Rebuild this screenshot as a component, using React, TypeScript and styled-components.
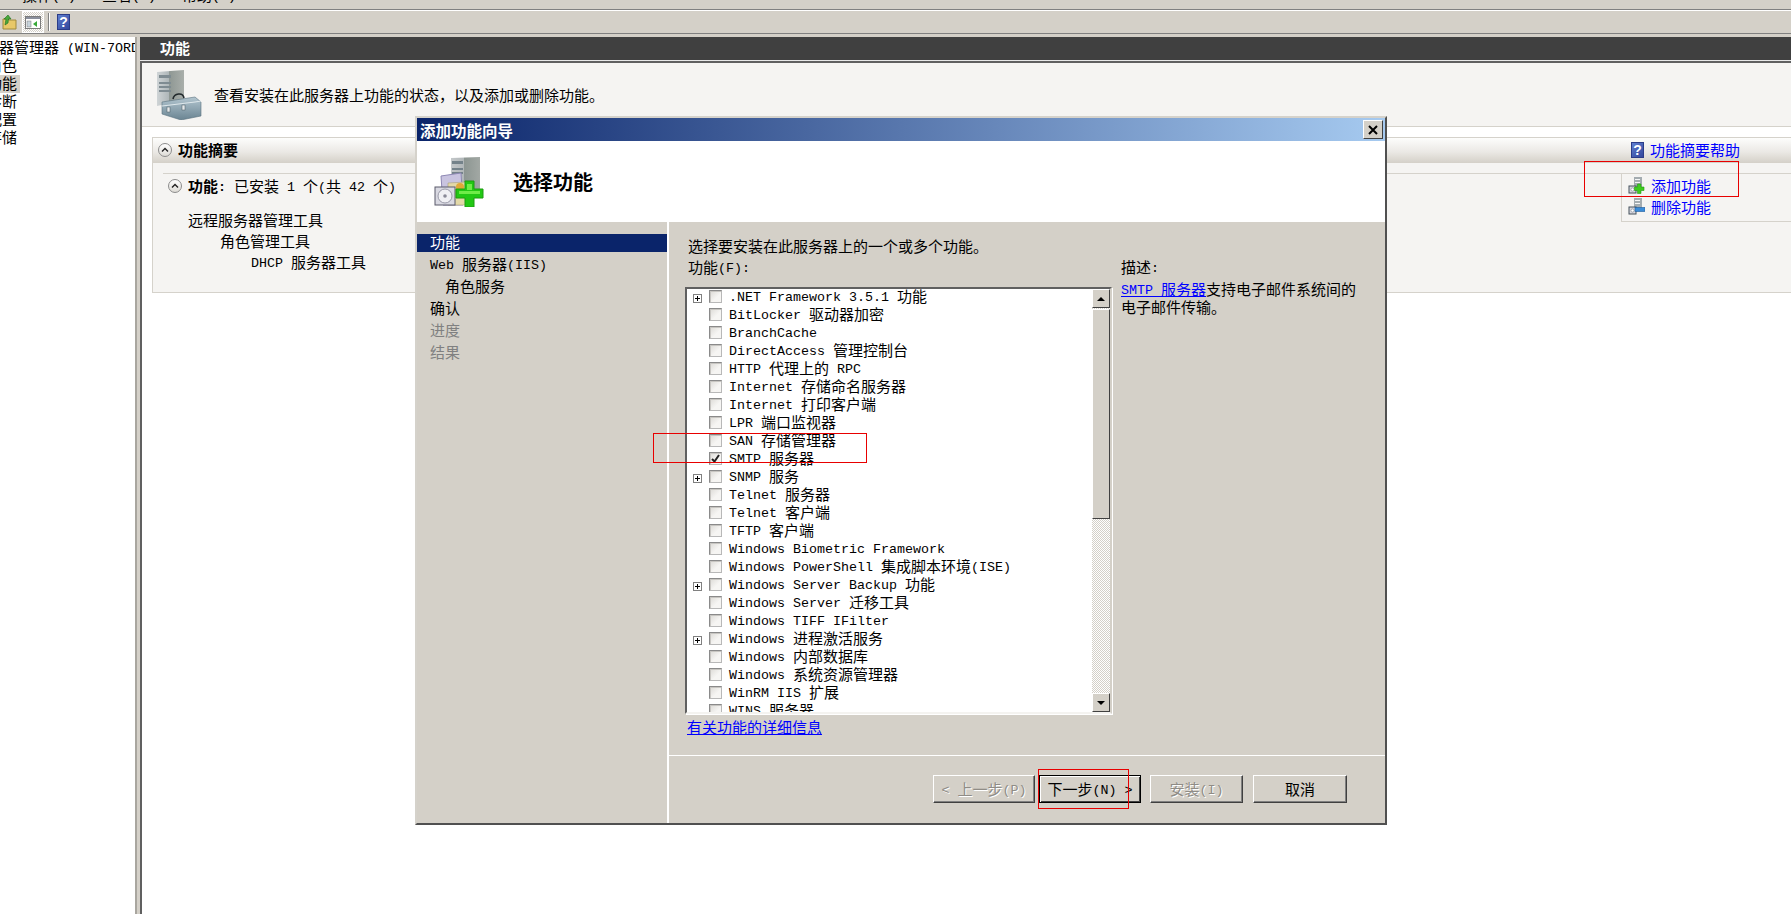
import React from 'react';
import styled, { createGlobalStyle, css } from 'styled-components';

const FACE = '#d4d0c8';
const PAPER = '#f5f4f2';
const LINE = '#d5d2cb';
const NAVY = '#0a246a';
const LINK = '#0000ff';

const GlobalStyle = createGlobalStyle`
  html, body {
    margin: 0;
    height: 100%;
    background: #fff;
    overflow: hidden;
  }
  body {
    font-family: "Noto Sans CJK SC", "Liberation Sans", sans-serif;
    font-size: 15px;
    line-height: 16px;
    color: #000;
  }
`;

const Latin = styled.span`
  position: relative;
  top: -1px;
  font-family: "Liberation Mono", "Noto Sans CJK SC", monospace;
  font-size: 13.33px;
  line-height: 0;
  white-space: pre;
`;

// SimSun-style runs: latin is half the width of the CJK glyphs, so it gets its own size
const Mixed: React.FC<{ text: string }> = ({ text }) => (
  <>
    {text.split(/([\u0000-\u00ff]+)/).map((run, i) =>
      i % 2 === 1 ? <Latin key={i}>{run}</Latin> : run
    )}
  </>
);

const Page = styled.div`
  position: relative;
  display: flex;
  flex-direction: column;
  width: 1791px;
  height: 914px;
  overflow: hidden;
`;

const MenuBar = styled.div`
  display: flex;
  flex: none;
  height: 9px;
  padding-left: 22px;
  gap: 26px;
  background: ${FACE};
  border-bottom: 1px solid #808080;
  overflow: hidden;
`;

const MenuItem = styled.span`
  margin-top: -13px;
  height: 18px;
`;

const ToolBar = styled.div`
  display: flex;
  flex: none;
  align-items: center;
  height: 22px;
  padding-left: 2px;
  background: ${FACE};
  border-top: 1px solid #fff;
  border-bottom: 1px solid #808080;
`;

const ToolToggle = styled.div`
  display: flex;
  align-items: center;
  justify-content: center;
  width: 22px;
  height: 22px;
  margin-left: 5px;
  box-sizing: border-box;
  border: 1px solid #fff;
  background-image: conic-gradient(${FACE} 25%, #fff 0 50%, ${FACE} 0 75%, #fff 0);
  background-size: 2px 2px;
`;

const ToolSeparator = styled.div`
  width: 1px;
  height: 18px;
  margin: 0 8px 0 4px;
  background: #808080;
  box-shadow: 1px 0 0 #fff;
`;

const Workspace = styled.div`
  display: flex;
  flex: 1;
  min-height: 0;
  padding-top: 3px;
  background: ${FACE};
`;

const TreePanel = styled.div`
  flex: none;
  width: 135px;
  padding-top: 2px;
  background: #fff;
  overflow: hidden;
`;

const TreeRoot = styled.div`
  margin-left: -31px;
  white-space: nowrap;
  height: 18px;
`;

const TreeNode = styled.div<{ $selected?: boolean }>`
  width: fit-content;
  margin-left: -13px;
  padding-right: 3px;
  height: 18px;
  background: ${(p) => (p.$selected ? FACE : 'transparent')};
`;

const Splitter = styled.div`
  flex: none;
  width: 5px;
  box-sizing: border-box;
  border-left: 2px solid #a9a69f;
`;

const ContentPane = styled.div`
  display: flex;
  flex: 1;
  flex-direction: column;
  min-width: 0;
  background: #fff;
`;

const PaneTitle = styled.div`
  flex: none;
  height: 23px;
  padding-left: 20px;
  line-height: 22px;
  font-weight: 700;
  color: #fff;
  background: #404040;
  border-bottom: 1px solid #e8e8e8;
`;

const PaneBody = styled.div`
  flex: 1;
  border-top: 2px solid #606060;
  border-left: 2px solid #606060;
`;

const IntroStrip = styled.div`
  display: flex;
  align-items: center;
  gap: 11px;
  height: 63px;
  padding-left: 15px;
  background: ${PAPER};
  border-bottom: 1px solid ${LINE};
`;

const Section = styled.div`
  margin: 10px 0 0 10px;
  height: 154px;
  background: ${PAPER};
  border: 1px solid ${LINE};
  border-right: 0;
`;

const SectionHead = styled.div`
  display: flex;
  align-items: center;
  height: 25px;
  box-sizing: border-box;
  padding: 0 51px 2px 5px;
  background: linear-gradient(#fdfdfc, #ebe9e5 55%, ${FACE});
`;

const HeadLabel = styled.span`
  flex: 1;
  margin-left: 6px;
  font-weight: 700;
`;

const ChevronRound = styled.span`
  display: flex;
  flex: none;
  align-items: center;
  justify-content: center;
  width: 14px;
  height: 14px;
  box-sizing: border-box;
  border: 1px solid #8c8c8c;
  border-radius: 50%;
  background: linear-gradient(#ffffff, #dddbd5);
`;

const ActionLink = styled.a`
  display: flex;
  align-items: center;
  gap: 6px;
  height: 21px;
  color: ${LINK};
`;

const SummaryBody = styled.div`
  display: flex;
  height: 116px;
  margin: 10px 0 0 10px;
  border-top: 1px solid ${LINE};
`;

const SummaryText = styled.div`
  flex: 1;
  padding: 2px 0 0 5px;
`;

const SummaryHead = styled.div`
  display: flex;
  align-items: center;
  gap: 6px;
  height: 20px;
  margin-bottom: 14px;
`;

const Bold = styled.b`
  font-weight: 700;
`;

const SummaryLine = styled.div<{ $indent: number }>`
  height: 21px;
  line-height: 19px;
  padding-left: ${(p) => p.$indent}px;
`;

const ActionBox = styled.div`
  flex: none;
  align-self: flex-start;
  width: 163px;
  height: 46px;
  padding: 1px 0 0 6px;
  border-left: 1px solid ${LINE};
  border-bottom: 1px solid ${LINE};
`;

/* wizard window, floats over the snap-in */
const Wizard = styled.div`
  position: absolute;
  left: 415px;
  top: 116px;
  display: flex;
  flex-direction: column;
  width: 972px;
  height: 709px;
  box-sizing: border-box;
  background: ${FACE};
  border: 2px solid;
  border-color: ${LINE} #505050 #505050 ${LINE};
`;

const WizardTitle = styled.div`
  display: flex;
  flex: none;
  align-items: center;
  justify-content: space-between;
  height: 23px;
  padding: 0 2px 0 3px;
  font-weight: 700;
  font-size: 15.5px;
  color: #fff;
  background: linear-gradient(90deg, ${NAVY}, #a6caf0);
`;

const CloseButton = styled.div`
  display: flex;
  align-items: center;
  justify-content: center;
  width: 20px;
  height: 19px;
  box-sizing: border-box;
  background: ${FACE};
  border: 1px solid;
  border-color: #fff #404040 #404040 #fff;
`;

const WizardHead = styled.div`
  display: flex;
  flex: none;
  align-items: center;
  gap: 29px;
  height: 81px;
  padding: 0 0 0 17px;
  background: #fff;
`;

const WizardHeading = styled.div`
  font-size: 20px;
  font-weight: 700;
`;

const WizardBody = styled.div`
  display: flex;
  flex: 1;
  min-height: 0;
`;

const StepNav = styled.div`
  flex: none;
  width: 250px;
  padding-top: 12px;
  border-right: 2px solid #fff;
`;

const StepItem = styled.div<{ $active?: boolean; $muted?: boolean; $sub?: boolean }>`
  height: 18px;
  margin-bottom: 4px;
  padding-left: ${(p) => (p.$sub ? 28 : 13)}px;
  ${(p) =>
    p.$active &&
    css`
      background: ${NAVY};
      color: #fff;
    `}
  ${(p) =>
    p.$muted &&
    css`
      color: #808080;
    `}
`;

const StepPane = styled.div`
  display: flex;
  flex: 1;
  flex-direction: column;
  min-width: 0;
  padding-top: 16px;
`;

const PaneLine = styled.div`
  height: 18px;
  padding-left: 19px;
`;

const PaneColumns = styled.div`
  display: flex;
  margin-top: 3px;
`;

const ListColumn = styled.div`
  flex: none;
  width: 427px;
  margin-left: 16px;
`;

const ListLabel = styled.div`
  height: 18px;
  padding-left: 3px;
`;

const ListBox = styled.div`
  display: flex;
  height: 427px;
  margin-top: 10px;
  box-sizing: border-box;
  background: #fff;
  border: 2px solid;
  border-color: #606060 ${FACE} #f4f3f0 #606060;
  box-shadow: 1px 1px 0 #fff;
`;

const ListRows = styled.div`
  flex: 1;
  overflow: hidden;
`;

const FeatureRow = styled.div`
  display: flex;
  align-items: center;
  height: 18px;
  white-space: nowrap;
`;

const FeatureName = styled.span`
  margin-bottom: 4px;
`;

const ExpanderSlot = styled.span`
  display: flex;
  flex: none;
  align-items: center;
  justify-content: center;
  width: 9px;
  height: 9px;
  margin: 0 7px 0 6px;
`;

const Expander = styled.span`
  position: relative;
  width: 9px;
  height: 9px;
  box-sizing: border-box;
  background: #fff;
  border: 1px solid #808080;
  &::before {
    content: '';
    position: absolute;
    left: 1px;
    top: 3px;
    width: 5px;
    height: 1px;
    background: #000;
  }
  &::after {
    content: '';
    position: absolute;
    left: 3px;
    top: 1px;
    width: 1px;
    height: 5px;
    background: #000;
  }
`;

const CheckBox = styled.span`
  display: flex;
  flex: none;
  align-items: center;
  justify-content: center;
  width: 13px;
  height: 13px;
  margin: 0 7px 3px 0;
  box-sizing: border-box;
  background: linear-gradient(135deg, #dcdad6, #f6f5f3 60%);
  border: 1px solid;
  border-color: #8a8a8a #b8b8b8 #b8b8b8 #8a8a8a;
  box-shadow: inset 1px 1px 0 #c8c6c2;
`;

const ScrollBar = styled.div`
  display: flex;
  flex: none;
  flex-direction: column;
  width: 18px;
  background-image: conic-gradient(${FACE} 25%, #fff 0 50%, ${FACE} 0 75%, #fff 0);
  background-size: 2px 2px;
`;

const ScrollButton = styled.div`
  display: flex;
  flex: none;
  align-items: center;
  justify-content: center;
  height: 19px;
  box-sizing: border-box;
  background: ${FACE};
  border: 1px solid;
  border-color: #fff #404040 #404040 #fff;
`;

const ScrollArrow = styled.span<{ $down?: boolean }>`
  width: 0;
  height: 0;
  border-left: 4px solid transparent;
  border-right: 4px solid transparent;
  ${(p) =>
    p.$down
      ? css`
          border-top: 4px solid #000;
        `
      : css`
          border-bottom: 4px solid #000;
        `}
`;

const ScrollThumb = styled.div`
  flex: none;
  height: 210px;
  margin-top: 1px;
  box-sizing: border-box;
  background: ${FACE};
  border: 1px solid;
  border-color: #fff #404040 #404040 #fff;
`;

const ScrollTrack = styled.div`
  flex: 1;
`;

const InfoLink = styled.a`
  display: block;
  margin: 5px 0 0 2px;
  color: ${LINK};
  text-decoration: underline;
`;

const DescColumn = styled.div`
  flex: 1;
  margin-left: 9px;
  padding-right: 20px;
`;

const DescLabel = styled.div`
  height: 18px;
`;

const DescText = styled.div`
  margin-top: 3px;
  height: 36px;
  line-height: 18px;
`;

const DescLink = styled.a`
  color: ${LINK};
  text-decoration: underline;
`;

const WizardFooter = styled.div`
  display: flex;
  justify-content: flex-end;
  margin-top: auto;
  height: 68px;
  box-sizing: border-box;
  padding: 19px 38px 0 0;
  border-top: 1px solid #fff;
`;

const WizButton = styled.button<{ $width: number; $gap: number; $primary?: boolean }>`
  width: ${(p) => p.$width}px;
  height: 28px;
  margin-left: ${(p) => p.$gap}px;
  padding: 0 0 1px;
  font: inherit;
  color: #000;
  background: ${FACE};
  border: 1px solid;
  border-color: #fff #404040 #404040 #fff;
  box-shadow: inset -1px -1px 0 #808080;
  ${(p) =>
    p.$primary &&
    css`
      border-color: #000;
      box-shadow: inset 1px 1px 0 #fff, inset -1px -1px 0 #404040;
    `}
  &:disabled {
    color: #8f8c86;
    text-shadow: 1px 1px 0 #fff;
  }
`;

const Callout = styled.div<{ $x: number; $y: number; $w: number; $h: number }>`
  position: absolute;
  left: ${(p) => p.$x}px;
  top: ${(p) => p.$y}px;
  width: ${(p) => p.$w}px;
  height: ${(p) => p.$h}px;
  box-sizing: border-box;
  border: 1px solid #e80000;
  pointer-events: none;
`;

const HelpBadge = styled.span`
  display: flex;
  flex: none;
  align-items: center;
  justify-content: center;
  width: 13px;
  height: 16px;
  font-family: "Liberation Sans", sans-serif;
  font-size: 14px;
  font-weight: 700;
  color: #fff;
  background: linear-gradient(135deg, #5f7fd0, #33479c);
  border: 1px solid #2b3c88;
  box-sizing: border-box;
`;

const FolderUpIcon = () => (
  <svg width="15" height="16" viewBox="0 0 15 16">
    <path d="M1 5h5l1 1h7v9H1z" fill="#e8c868" stroke="#a08a3c" />
    <path d="M3 11 4 5l-2 0L6 1l3 4H6.5L6 9z" fill="#4aa83c" stroke="#1f6e1f" strokeWidth=".6" />
  </svg>
);

const PanelIcon = () => (
  <svg width="16" height="13" viewBox="0 0 16 13">
    <rect x=".5" y=".5" width="15" height="12" fill="#fff" stroke="#7b7b7b" />
    <rect x="1" y="1" width="14" height="2" fill="#8a8f9c" />
    <rect x="2" y="5" width="4" height="6" fill="#c8d4dc" stroke="#7b7b7b" strokeWidth=".5" />
    <path d="M12 5v6L8 8z" fill="#38a838" />
  </svg>
);

const Chevron = () => (
  <svg width="8" height="6" viewBox="0 0 8 6">
    <path d="M1 4.5 4 1.5 7 4.5" fill="none" stroke="#222" strokeWidth="1.4" />
  </svg>
);

const CloseMark = () => (
  <svg width="10" height="10" viewBox="0 0 10 10">
    <path d="M1 1 9 9M9 1 1 9" stroke="#000" strokeWidth="2" />
  </svg>
);

const CheckMark = () => (
  <svg width="9" height="9" viewBox="0 0 9 9">
    <path d="M1 5 3.5 7.5 8 1" fill="none" stroke="#222" strokeWidth="2" />
  </svg>
);

const ToolboxIcon = () => (
  <svg width="46" height="50" viewBox="0 0 46 50">
    <defs>
      <linearGradient id="tower" x1="0" x2="1" y1="0" y2="0">
        <stop offset="0" stopColor="#cfd4d6" />
        <stop offset=".45" stopColor="#aeb6b8" />
        <stop offset=".46" stopColor="#8f9894" />
        <stop offset="1" stopColor="#a9aeaa" />
      </linearGradient>
      <linearGradient id="box" x1="0" x2="0" y1="0" y2="1">
        <stop offset="0" stopColor="#b3c6d0" />
        <stop offset="1" stopColor="#6a8492" />
      </linearGradient>
    </defs>
    <path d="M0 2 27 0V30L0 36z" fill="url(#tower)" />
    <path d="M2 5h12v3H2zM2 12h12v2H2zM2 16h12v2H2zM2 20h12v2H2z" fill="#7f8c92" />
    <path d="M5 32 38 27l6 5v14l-20 4L5 44z" fill="url(#box)" stroke="#5a7280" strokeWidth=".6" />
    <path d="M5 36l33-4 6-1" fill="none" stroke="#dfe8ec" />
    <path d="M16 29c1-6 10-7 11-1" fill="none" stroke="#22292c" strokeWidth="1.6" />
    <rect x="10" y="37" width="3" height="5" fill="#e4e8ea" stroke="#4a5a62" strokeWidth=".5" />
    <rect x="25" y="35" width="3" height="5" fill="#e4e8ea" stroke="#4a5a62" strokeWidth=".5" />
  </svg>
);

const WizardIcon = () => (
  <svg width="50" height="50" viewBox="0 0 50 50">
    <defs>
      <linearGradient id="wtower" x1="0" x2="1" y1="0" y2="0">
        <stop offset="0" stopColor="#c4c8ca" />
        <stop offset=".45" stopColor="#b0b6b8" />
        <stop offset=".46" stopColor="#8d9692" />
        <stop offset="1" stopColor="#a2a8a4" />
      </linearGradient>
    </defs>
    <path d="M17 1 46 0V36H17z" fill="url(#wtower)" />
    <path d="M18 4h11v3H18zM18 11h11v2H18zM18 15h11v2H18z" fill="#74828a" />
    <path d="M7 19 27 16 29 48 9 48z" fill="#c9c4e0" stroke="#8e88b4" />
    <path d="M14 26 32 25 33 48 14 48z" fill="#e3d9a8" stroke="#a79f7a" strokeWidth=".6" />
    <circle cx="26" cy="30" r="4" fill="#e0a838" />
    <rect x="1" y="30" width="20" height="18" fill="#d9d9e2" stroke="#5a5a6a" />
    <circle cx="11" cy="39" r="7" fill="#f0f0f4" stroke="#9a9aa8" />
    <circle cx="11" cy="39" r="1.8" fill="#8a8a98" />
    <path d="M31 24h9v8h9v9h-9v9h-9v-9h-9v-9h9z" fill="#22c814" stroke="#1c9c10" />
    <path d="M33 27h5v6h-5zM25 34h21v3H25z" fill="#6fec48" />
  </svg>
);

const ActionIcon: React.FC<{ variant: 'add' | 'remove' }> = ({ variant }) => (
  <svg width="17" height="17" viewBox="0 0 17 17">
    <path d="M6 0h8v10H6z" fill="#a4acb0" />
    <path d="M7 2h5v1H7zM7 5h5v1H7z" fill="#f4f6f6" />
    <rect x="1" y="9" width="7" height="7" fill="#d8d8e0" stroke="#44505a" />
    <circle cx="4.5" cy="12.5" r="1.6" fill="#fff" stroke="#77808a" strokeWidth=".6" />
    {variant === 'add' ? (
      <path d="M9.5 7h3.5v3h3v3.5h-3v3h-3.5v-3h-3V10h3z" fill="#3ecb1e" stroke="#249c10" strokeWidth=".6" />
    ) : (
      <rect x="7" y="9.5" width="10" height="4" fill="#3b8cd8" stroke="#1d5a9c" strokeWidth=".6" />
    )}
  </svg>
);

type Feature = { name: string; expandable?: boolean; checked?: boolean };

const features: Feature[] = [
  { name: '.NET Framework 3.5.1 功能', expandable: true },
  { name: 'BitLocker 驱动器加密' },
  { name: 'BranchCache' },
  { name: 'DirectAccess 管理控制台' },
  { name: 'HTTP 代理上的 RPC' },
  { name: 'Internet 存储命名服务器' },
  { name: 'Internet 打印客户端' },
  { name: 'LPR 端口监视器' },
  { name: 'SAN 存储管理器' },
  { name: 'SMTP 服务器', checked: true },
  { name: 'SNMP 服务', expandable: true },
  { name: 'Telnet 服务器' },
  { name: 'Telnet 客户端' },
  { name: 'TFTP 客户端' },
  { name: 'Windows Biometric Framework' },
  { name: 'Windows PowerShell 集成脚本环境(ISE)' },
  { name: 'Windows Server Backup 功能', expandable: true },
  { name: 'Windows Server 迁移工具' },
  { name: 'Windows TIFF IFilter' },
  { name: 'Windows 进程激活服务', expandable: true },
  { name: 'Windows 内部数据库' },
  { name: 'Windows 系统资源管理器' },
  { name: 'WinRM IIS 扩展' },
  { name: 'WINS 服务器' },
];

const App: React.FC = () => (
  <Page>
    <GlobalStyle />
    <MenuBar>
      <MenuItem>
        <Mixed text="操作(A)" />
      </MenuItem>
      <MenuItem>
        <Mixed text="查看(V)" />
      </MenuItem>
      <MenuItem>
        <Mixed text="帮助(H)" />
      </MenuItem>
    </MenuBar>
    <ToolBar>
      <FolderUpIcon />
      <ToolToggle>
        <PanelIcon />
      </ToolToggle>
      <ToolSeparator />
      <HelpBadge>?</HelpBadge>
    </ToolBar>
    <Workspace>
      <TreePanel>
        <TreeRoot>
          <Mixed text="服务器管理器 (WIN-7ORD)" />
        </TreeRoot>
        <TreeNode>角色</TreeNode>
        <TreeNode $selected>功能</TreeNode>
        <TreeNode>诊断</TreeNode>
        <TreeNode>配置</TreeNode>
        <TreeNode>存储</TreeNode>
      </TreePanel>
      <Splitter />
      <ContentPane>
        <PaneTitle>功能</PaneTitle>
        <PaneBody>
          <IntroStrip>
            <ToolboxIcon />
            查看安装在此服务器上功能的状态，以及添加或删除功能。
          </IntroStrip>
          <Section>
            <SectionHead>
              <ChevronRound>
                <Chevron />
              </ChevronRound>
              <HeadLabel>功能摘要</HeadLabel>
              <ActionLink>
                <HelpBadge>?</HelpBadge>
                功能摘要帮助
              </ActionLink>
            </SectionHead>
            <SummaryBody>
              <SummaryText>
                <SummaryHead>
                  <ChevronRound>
                    <Chevron />
                  </ChevronRound>
                  <span>
                    <Bold>
                      <Mixed text="功能:" />
                    </Bold>
                    <Mixed text=" 已安装 1 个(共 42 个)" />
                  </span>
                </SummaryHead>
                <SummaryLine $indent={20}>远程服务器管理工具</SummaryLine>
                <SummaryLine $indent={52}>角色管理工具</SummaryLine>
                <SummaryLine $indent={83}>
                  <Mixed text="DHCP 服务器工具" />
                </SummaryLine>
              </SummaryText>
              <ActionBox>
                <ActionLink>
                  <ActionIcon variant="add" />
                  添加功能
                </ActionLink>
                <ActionLink>
                  <ActionIcon variant="remove" />
                  删除功能
                </ActionLink>
              </ActionBox>
            </SummaryBody>
          </Section>
        </PaneBody>
      </ContentPane>
    </Workspace>

    <Wizard>
      <WizardTitle>
        添加功能向导
        <CloseButton>
          <CloseMark />
        </CloseButton>
      </WizardTitle>
      <WizardHead>
        <WizardIcon />
        <WizardHeading>选择功能</WizardHeading>
      </WizardHead>
      <WizardBody>
        <StepNav>
          <StepItem $active>功能</StepItem>
          <StepItem>
            <Mixed text="Web 服务器(IIS)" />
          </StepItem>
          <StepItem $sub>角色服务</StepItem>
          <StepItem>确认</StepItem>
          <StepItem $muted>进度</StepItem>
          <StepItem $muted>结果</StepItem>
        </StepNav>
        <StepPane>
          <PaneLine>选择要安装在此服务器上的一个或多个功能。</PaneLine>
          <PaneColumns>
            <ListColumn>
              <ListLabel>
                <Mixed text="功能(F):" />
              </ListLabel>
              <ListBox>
                <ListRows>
                  {features.map((feature) => (
                    <FeatureRow key={feature.name}>
                      <ExpanderSlot>{feature.expandable && <Expander />}</ExpanderSlot>
                      <CheckBox>{feature.checked && <CheckMark />}</CheckBox>
                      <FeatureName>
                        <Mixed text={feature.name} />
                      </FeatureName>
                    </FeatureRow>
                  ))}
                </ListRows>
                <ScrollBar>
                  <ScrollButton>
                    <ScrollArrow />
                  </ScrollButton>
                  <ScrollThumb />
                  <ScrollTrack />
                  <ScrollButton>
                    <ScrollArrow $down />
                  </ScrollButton>
                </ScrollBar>
              </ListBox>
              <InfoLink>有关功能的详细信息</InfoLink>
            </ListColumn>
            <DescColumn>
              <DescLabel>
                <Mixed text="描述:" />
              </DescLabel>
              <DescText>
                <DescLink>
                  <Mixed text="SMTP 服务器" />
                </DescLink>
                支持电子邮件系统间的电子邮件传输。
              </DescText>
            </DescColumn>
          </PaneColumns>
          <WizardFooter>
            <WizButton $width={102} $gap={0} disabled>
              <Mixed text="< 上一步(P)" />
            </WizButton>
            <WizButton $width={102} $gap={4} $primary>
              <Mixed text="下一步(N) >" />
            </WizButton>
            <WizButton $width={93} $gap={9} disabled>
              <Mixed text="安装(I)" />
            </WizButton>
            <WizButton $width={94} $gap={10}>
              取消
            </WizButton>
          </WizardFooter>
        </StepPane>
      </WizardBody>
    </Wizard>

    <Callout $x={1584} $y={161} $w={155} $h={36} />
    <Callout $x={653} $y={433} $w={214} $h={30} />
    <Callout $x={1038} $y={769} $w={91} $h={40} />
  </Page>
);

export default App;
